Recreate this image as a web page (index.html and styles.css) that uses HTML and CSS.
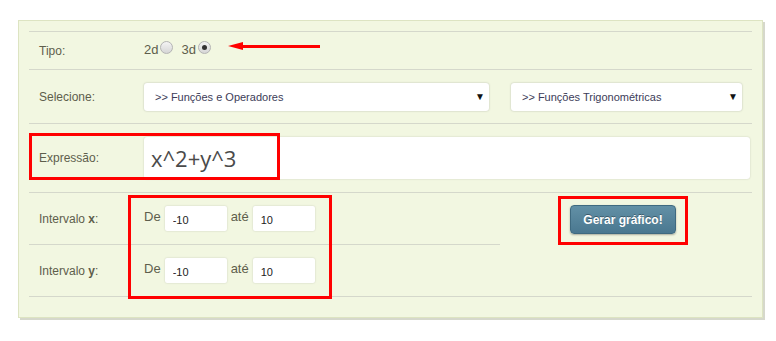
FILE: index.html
```html
<html>

<head>
    <meta http-equiv="Content-Type" content="text/html; charset=utf-8">
    <title>Gráfico 3D</title>
    <link rel="stylesheet" href="styles.css">
</head>

<body>
    <div class="painel">
        <!-- tipo -->
        <div class="linha linha-tipo">
            <div class="rotulo">Tipo:</div>
            <div class="campo">
                <span class="opcao">2d</span><span class="radio"></span>
                <span class="opcao">3d</span><span class="radio marcado"></span>
            </div>
            <div class="seta"><span class="seta-ponta"></span><span class="seta-haste"></span></div>
        </div>

        <!-- selecione -->
        <div class="linha linha-sel">
            <div class="rotulo">Selecione:</div>
            <div class="campo">
                <div class="selecao sel-grande"><span>&gt;&gt; Funções e Operadores</span><b>▼</b></div>
                <div class="selecao sel-pequena"><span>&gt;&gt; Funções Trigonométricas</span><b>▼</b></div>
            </div>
        </div>

        <!-- expressao -->
        <div class="linha linha-expr">
            <div class="rotulo">Expressão:</div>
            <div class="campo">
                <div class="expressao">x^2+y^3</div>
            </div>
            <div class="marca marca-expr"></div>
        </div>

        <!-- intervalos -->
        <div class="intervalos">
            <div class="coluna">
                <div class="linha linha-int">
                    <div class="rotulo">Intervalo <b>x</b>:</div>
                    <div class="campo">
                        <span class="txt">De</span><input class="num" value="-10">
                        <span class="txt">até</span><input class="num" value="10">
                    </div>
                </div>
                <div class="linha linha-int">
                    <div class="rotulo">Intervalo <b>y</b>:</div>
                    <div class="campo">
                        <span class="txt">De</span><input class="num" value="-10">
                        <span class="txt">até</span><input class="num" value="10">
                    </div>
                </div>
                <div class="marca marca-int"></div>
            </div>
            <div class="acao">
                <button class="botao">Gerar gráfico!</button>
                <div class="marca marca-botao"></div>
            </div>
        </div>
    </div>
</body>

</html>
```

FILE: styles.css
```css
body {
    margin: 0;
    background: #fff;
    font-family: "Liberation Sans", Arial, sans-serif;
    font-size: 12px;
    color: #5e5e4c;
}

.painel {
    position: relative;
    width: 723px;
    margin: 20px 0 0 18px;
    padding: 10px 10px 20px 10px;
    background: #f2f7e1;
    border: 1px solid #dde4c2;
    box-shadow: 2px 2px 0 #d6d8cc;
}

.linha {
    position: relative;
    display: flex;
    align-items: center;
    border-top: 1px solid #d5d8cb;
    padding-left: 10px;
}

.rotulo {
    width: 105px;
    flex-shrink: 0;
}

.rotulo b {
    font-weight: bold;
}

.campo {
    display: flex;
    align-items: center;
}

/* tipo */
.linha-tipo {
    height: 37px;
}

.linha-tipo .campo {
    margin-top: -2px;
}

.opcao {
    font-size: 13px;
}

.radio {
    display: inline-block;
    width: 11px;
    height: 11px;
    margin: -5px 8px 0 2px;
    border-radius: 50%;
    border: 1px solid #b4b4b4;
    background: linear-gradient(#f4f4f4, #d6d6d6);
    position: relative;
}

.radio.marcado::after {
    content: "";
    position: absolute;
    left: 3px;
    top: 3px;
    width: 5px;
    height: 5px;
    border-radius: 50%;
    background: #333;
}

.seta {
    position: absolute;
    left: 199px;
    top: 10px;
    display: flex;
    align-items: center;
}

.seta-ponta {
    width: 0;
    height: 0;
    border-top: 4px solid transparent;
    border-bottom: 4px solid transparent;
    border-right: 15px solid #f00;
}

.seta-haste {
    width: 77px;
    height: 3px;
    background: #f00;
}

/* selecione */
.linha-sel {
    height: 53px;
}

.selecao {
    display: flex;
    justify-content: space-between;
    align-items: center;
    box-sizing: border-box;
    height: 28px;
    padding: 0 4px 0 11px;
    background: #fff;
    border-radius: 3px;
    box-shadow: 0 0 2px rgba(0, 0, 0, 0.25);
    font-size: 11px;
    color: #3c3c58;
}

.selecao b {
    font-size: 10px;
    color: #111;
    margin-top: -1px;
}

.sel-grande {
    width: 345px;
}

.sel-pequena {
    width: 231px;
    margin-left: 22px;
}

/* expressao */
.linha-expr {
    height: 68px;
}

.expressao {
    box-sizing: border-box;
    width: 606px;
    height: 42px;
    padding: 2px 0 0 7px;
    background: #fff;
    border-radius: 3px;
    box-shadow: 0 0 2px rgba(0, 0, 0, 0.18);
    font-family: "Open Sans", sans-serif;
    font-size: 22px;
    line-height: 38px;
    color: #4a4a4a;
}

/* intervalos */
.intervalos {
    display: flex;
    border-top: 1px solid #d5d8cb;
    border-bottom: 1px solid #d5d8cb;
}

.coluna {
    position: relative;
    width: 471px;
}

.linha-int {
    height: 51px;
    border-top: none;
}

.linha-int + .linha-int {
    border-top: 1px solid #d5d8cb;
}

.txt {
    font-size: 13px;
    margin-top: -4px;
}

.num {
    box-sizing: border-box;
    width: 62px;
    height: 25px;
    margin: 0 4px 0 4px;
    padding: 2px 0 0 8px;
    border: none;
    border-radius: 2px;
    background: #fff;
    box-shadow: 0 0 2px rgba(0, 0, 0, 0.18);
    font-family: "Liberation Sans", Arial, sans-serif;
    font-size: 11px;
    color: #222;
}

.acao {
    position: relative;
    flex: 1;
    display: flex;
    justify-content: flex-start;
    align-items: flex-start;
    padding: 12px 0 0 70px;
}

.botao {
    width: 106px;
    height: 29px;
    border: 1px solid #3f6a80;
    border-radius: 4px;
    background: linear-gradient(#6290a6, #4a7890);
    box-shadow: 0 1px 2px rgba(0, 0, 0, 0.3);
    color: #fff;
    font-family: "Liberation Sans", Arial, sans-serif;
    font-size: 12px;
    font-weight: bold;
    text-shadow: 0 -1px 0 rgba(0, 0, 0, 0.35);
    cursor: pointer;
}

/* marcacoes vermelhas */
.marca {
    position: absolute;
    border: 3px solid #f00;
    box-sizing: border-box;
}

.marca-expr {
    left: 0;
    top: 9px;
    width: 251px;
    height: 47px;
}

.marca-int {
    left: 99px;
    top: 2px;
    width: 204px;
    height: 104px;
}

.marca-botao {
    left: 58px;
    top: 3px;
    width: 130px;
    height: 49px;
}
```
